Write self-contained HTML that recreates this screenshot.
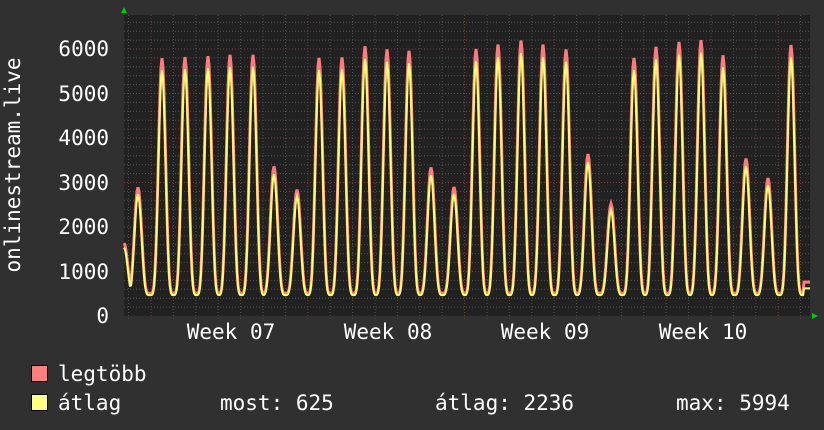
<!DOCTYPE html>
<html><head><meta charset="utf-8"><style>
html,body{margin:0;padding:0;background:#303030;width:824px;height:430px;overflow:hidden}
svg{display:block}
text{font-family:"DejaVu Sans Mono","Liberation Mono",monospace;font-size:21px;fill:#fff}
</style></head><body>
<svg id="g" width="824" height="430" xmlns="http://www.w3.org/2000/svg">
<rect width="824" height="430" fill="#303030"/>
<rect x="124" y="15" width="686" height="301" fill="#212121"/>
<g id="grid"></g>
<polyline id="mx" fill="none" stroke="#ff7b7b" stroke-width="3"/>
<polyline id="av" fill="none" stroke="#ffff70" stroke-width="2"/>
<polygon points="121,13 127,13 124,7" fill="#00cc00"/>
<polygon points="812,313 812,319 818,316" fill="#00cc00"/>
<g text-anchor="end">
<text x="109" y="323">0</text>
<text x="109" y="279">1000</text>
<text x="109" y="234">2000</text>
<text x="109" y="190">3000</text>
<text x="109" y="145">4000</text>
<text x="109" y="101">5000</text>
<text x="109" y="56">6000</text>
</g>
<g text-anchor="middle">
<text x="231" y="339">Week 07</text>
<text x="388" y="339">Week 08</text>
<text x="545" y="339">Week 09</text>
<text x="703" y="339">Week 10</text>
</g>
<text transform="translate(20,165) rotate(-90)" text-anchor="middle">onlinestream.live</text>
<rect x="31.5" y="365.5" width="16" height="16" fill="#ff7f7f" stroke="#000"/>
<rect x="31.5" y="394.5" width="16" height="16" fill="#ffff80" stroke="#000"/>
<text x="58" y="381">legtöbb</text>
<text x="58" y="410">átlag</text>
<text x="220" y="410">most: 625</text>
<text x="435" y="410">átlag: 2236</text>
<text x="676" y="410">max: 5994</text>
</svg>
<script>
var g=document.getElementById('grid'),s='';
for(var v=200;v<=6600;v+=200){var y=316-v*0.0445;if(y<15)break;
 s+='<line x1="124" x2="810" y1="'+y+'" y2="'+y+'" stroke="'+(v%1000==0?'#7a3a3a':'#505050')+'" stroke-dasharray="1,2"/>';}
for(var x=151-22.4;x<810;x+=22.4){var wk=Math.abs(((x-151)/156.8)-Math.round((x-151)/156.8))<0.01;
 s+='<line x1="'+x+'" x2="'+x+'" y1="15" y2="319" stroke="'+(wk?'#7a3a3a':'#505050')+'" stroke-dasharray="1,2"/>';}
g.innerHTML=s;
var pk=[[124,1600],[138,2850],[162,5750],[185,5780],[208,5800],[230,5830],[253,5830],[274,3320],[297,2800],[319,5760],[342,5770],[365,6020],[387,5950],[409,5920],[431,3300],[454,2860],[476,5960],[498,6060],[521,6150],[543,6060],[566,5950],[588,3600],[611,2480],[634,5760],[656,6010],[679,6120],[701,6160],[723,5820],[746,3500],[768,3060],[791,6050]];
function val(x,scale){var best=0,mn=470;
 for(var i=0;i<pk.length;i++){var d=(x-pk[i][0])/22.4*2*Math.PI;if(Math.abs(d)>Math.PI)continue;
  var f=Math.pow((1+Math.cos(d))/2,2);var v=mn+(pk[i][1]*scale-mn)*f;if(v>best)best=v;}
 return Math.max(best,mn);}
var a='',b='';
for(var x=124;x<=810;x++){var m=val(x,1)+40,av=val(x,0.96);
 if(x>803){m=760;av=620;}
 a+=x+','+(316-m*0.0445)+' ';b+=x+','+(316-av*0.0445)+' ';}
document.getElementById('mx').setAttribute('points',a);
document.getElementById('av').setAttribute('points',b);
</script>
</body></html>
